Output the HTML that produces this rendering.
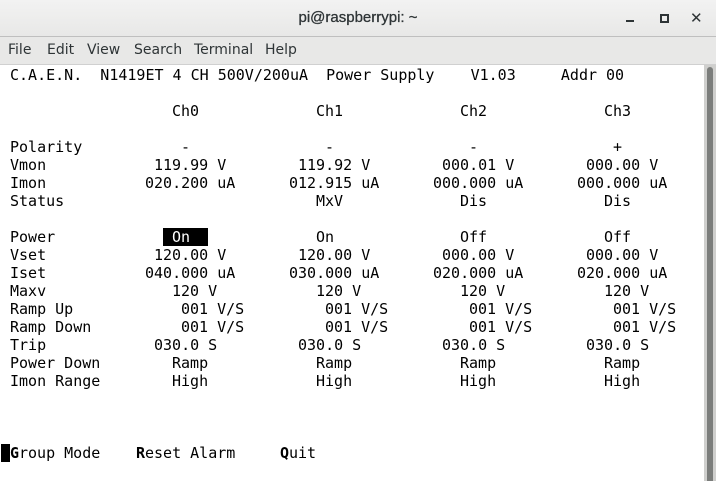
<!DOCTYPE html>
<html><head><meta charset="utf-8"><style>
html,body{margin:0;padding:0;width:716px;height:481px;overflow:hidden;background:#fff;}
.title{position:absolute;left:0;top:0;width:716px;height:36px;background:linear-gradient(#f2f2f2,#e8e8e7);border-bottom:1px solid #bfbfbf;font-family:"DejaVu Sans","Liberation Sans",sans-serif;}
.title .t{position:absolute;left:0;width:716px;top:9px;text-align:center;font-family:"Liberation Sans",sans-serif;font-size:15px;font-weight:normal;color:#2e3436;-webkit-text-stroke:0.3px #2e3436;}
.menu{position:absolute;left:0;top:37px;width:716px;height:27px;background:#e8e8e7;border-bottom:1px solid #d0d0d0;font-family:"DejaVu Sans","Liberation Sans",sans-serif;font-size:14px;color:#2e3436;}
.menu span{position:absolute;top:5px;}
.term{position:absolute;left:0;top:65px;width:704px;height:416px;background:#fff;font-family:"DejaVu Sans Mono","Liberation Mono",monospace;font-size:15px;color:#000;}
.term span{position:absolute;white-space:pre;line-height:18px;height:18px;}
.sb{position:absolute;left:704px;top:65px;width:12px;height:416px;background:#cfcfcd;}
.thumb{position:absolute;left:707px;top:67px;width:6px;height:414px;background:#7b7d7b;border-radius:3px 3px 0 0;}
</style></head><body>
<div class="title"><div class="t">pi@raspberrypi: ~</div>
<div style="position:absolute;left:626px;top:20px;width:8px;height:2px;background:#2e3436"></div>
<div style="position:absolute;left:660px;top:14px;width:5px;height:5px;border:2px solid #2e3436"></div>
<div style="position:absolute;left:690px;top:9px;font-size:15px;font-weight:bold;color:#2e3436">✕</div>
</div>
<div class="menu"><span style="left:8px">File</span><span style="left:47px">Edit</span><span style="left:87px">View</span><span style="left:134px">Search</span><span style="left:194px">Terminal</span><span style="left:265px">Help</span></div>
<div class="term" id="t"></div>
<div class="sb"></div><div class="thumb"></div>
<script>
var t=document.getElementById('t');
function p(row,col,s,st){var e=document.createElement('span');e.textContent=s;e.style.top=(1+18*row)+'px';e.style.left=(1+9*col)+'px';if(st)e.setAttribute('style',e.getAttribute('style')+';'+st);t.appendChild(e);}
p(0,1,"C.A.E.N.  N1419ET 4 CH 500V/200uA  Power Supply    V1.03     Addr 00");
[["Ch0",19],["Ch1",35],["Ch2",51],["Ch3",67]].forEach(function(a){p(2,a[1],a[0]);});
function row(r,label,vals,cols){p(r,1,label);vals.forEach(function(v,i){p(r,cols[i],v);});}
row(4,"Polarity",["-","-","-","+"],[20,36,52,68]);
row(5,"Vmon",["119.99 V","119.92 V","000.01 V","000.00 V"],[17,33,49,65]);
row(6,"Imon",["020.200 uA","012.915 uA","000.000 uA","000.000 uA"],[16,32,48,64]);
row(7,"Status",["MxV","Dis","Dis"],[35,51,67]);
p(9,18,"     ","background:#000;width:45px");
p(9,19,"On","color:#fff");
row(9,"Power",["On","Off","Off"],[35,51,67]);
row(10,"Vset",["120.00 V","120.00 V","000.00 V","000.00 V"],[17,33,49,65]);
row(11,"Iset",["040.000 uA","030.000 uA","020.000 uA","020.000 uA"],[16,32,48,64]);
row(12,"Maxv",["120 V","120 V","120 V","120 V"],[19,35,51,67]);
row(13,"Ramp Up",["001 V/S","001 V/S","001 V/S","001 V/S"],[20,36,52,68]);
row(14,"Ramp Down",["001 V/S","001 V/S","001 V/S","001 V/S"],[20,36,52,68]);
row(15,"Trip",["030.0 S","030.0 S","030.0 S","030.0 S"],[17,33,49,65]);
row(16,"Power Down",["Ramp","Ramp","Ramp","Ramp"],[19,35,51,67]);
row(17,"Imon Range",["High","High","High","High"],[19,35,51,67]);
p(21,0," ","background:#000;width:9px");
p(21,1,"G","font-weight:bold");p(21,2,"roup Mode");
p(21,15,"R","font-weight:bold");p(21,16,"eset Alarm");
p(21,31,"Q","font-weight:bold");p(21,32,"uit");
</script>
</body></html>
